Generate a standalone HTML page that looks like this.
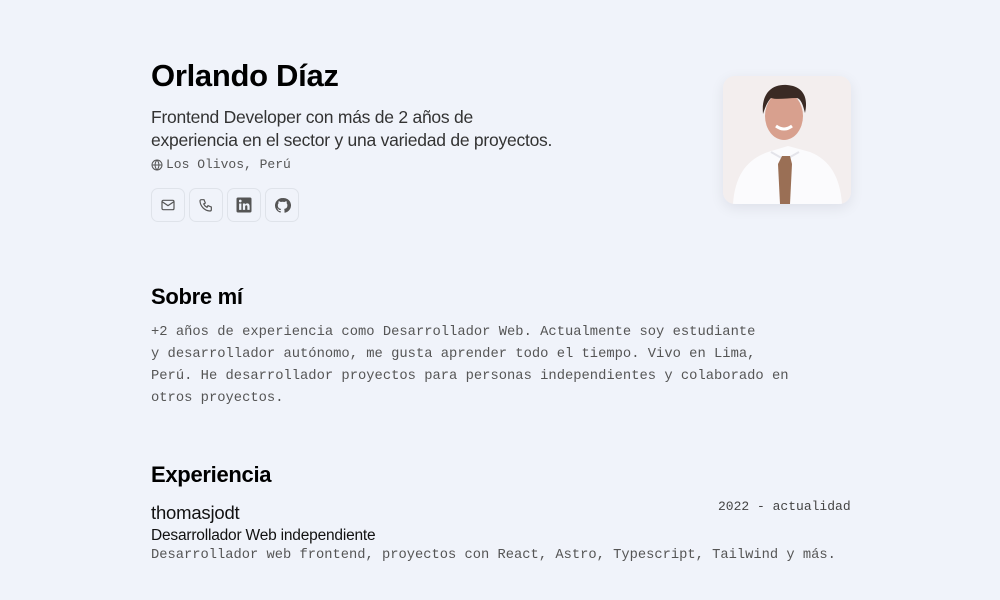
<!DOCTYPE html>
<html><head><meta charset="utf-8"><style>
*{margin:0;padding:0;box-sizing:border-box}
body{width:1000px;height:600px;background:#f0f3fa;font-family:"Liberation Sans",sans-serif;color:#000;position:relative;overflow:hidden}
.a{position:absolute;white-space:nowrap}
.mono{font-family:"Liberation Mono",monospace;color:#555}
.ic{position:absolute;top:188px;width:34px;height:34px;border:1px solid #dfe3ea;border-radius:7px;display:flex;align-items:center;justify-content:center}
</style></head><body>
<div class="a" style="left:151px;top:58px;font-size:31px;font-weight:bold;letter-spacing:-0.3px">Orlando Díaz</div>
<div class="a" style="left:151px;top:106px;font-size:17.5px;line-height:23px;color:#333;letter-spacing:-0.25px">Frontend Developer con más de 2 años de<br>experiencia en el sector y una variedad de proyectos.</div>
<div class="a mono" style="left:151px;top:157px;font-size:13px;display:flex;align-items:center"><svg width="12" height="12" viewBox="0 0 24 24" fill="none" stroke="#555" stroke-width="2" style="margin-right:3px"><circle cx="12" cy="12" r="10"/><path d="M2 12h20M12 2a15 15 0 0 1 0 20M12 2a15 15 0 0 0 0 20"/></svg>Los Olivos, Perú</div>
<div class="ic" style="left:151px"><svg width="16" height="16" viewBox="0 0 24 24" fill="none" stroke="#555" stroke-width="1.8"><rect x="3" y="5" width="18" height="14" rx="2"/><path d="M3 7l9 6 9-6"/></svg></div>
<div class="ic" style="left:189px"><svg width="16" height="16" viewBox="0 0 24 24" fill="none" stroke="#555" stroke-width="1.8"><path d="M5 4h4l2 5-2.5 1.5a11 11 0 0 0 5 5L15 13l5 2v4a2 2 0 0 1-2 2A16 16 0 0 1 3 6a2 2 0 0 1 2-2"/></svg></div>
<div class="ic" style="left:227px"><svg width="18" height="18" viewBox="0 0 24 24"><rect x="2" y="2" width="20" height="20" rx="2" fill="#555"/><rect x="5.5" y="10" width="3" height="8.5" fill="#f0f3fa"/><circle cx="7" cy="6.7" r="1.8" fill="#f0f3fa"/><path d="M10.5 10h2.8v1.3c.6-1 1.7-1.5 2.9-1.5 2.3 0 3.3 1.4 3.3 4v4.7h-3v-4.3c0-1.2-.4-1.9-1.4-1.9s-1.6.7-1.6 1.9v4.3h-3z" fill="#f0f3fa"/></svg></div>
<div class="ic" style="left:265px"><svg width="17" height="17" viewBox="0 0 24 24" fill="#555"><path d="M12 1.5a10.5 10.5 0 0 0-3.3 20.5c.5.1.7-.2.7-.5v-1.8c-2.9.6-3.5-1.4-3.5-1.4-.5-1.2-1.2-1.5-1.2-1.5-.9-.7.1-.6.1-.6 1 .1 1.6 1.1 1.6 1.1.9 1.6 2.5 1.1 3.1.9.1-.7.4-1.1.7-1.4-2.3-.3-4.8-1.2-4.8-5.2 0-1.1.4-2.1 1.1-2.8-.1-.3-.5-1.3.1-2.8 0 0 .9-.3 2.9 1.1a10 10 0 0 1 5.3 0c2-1.4 2.9-1.1 2.9-1.1.6 1.5.2 2.5.1 2.8.7.7 1.1 1.7 1.1 2.8 0 4-2.5 4.9-4.8 5.2.4.3.7 1 .7 2v2.9c0 .3.2.6.7.5A10.5 10.5 0 0 0 12 1.5"/></svg></div>
<div class="a" style="left:723px;top:76px;width:128px;height:128px;border-radius:12px;overflow:hidden;box-shadow:0 4px 14px rgba(0,0,40,.08)">
<svg width="128" height="128" viewBox="0 0 128 128"><rect width="128" height="128" fill="#f3eeee"/><path d="M10 128c2-30 15-45 35-52l20-6 22 6c20 8 30 25 32 52z" fill="#fbfbfd"/><path d="M48 76l14 8 14-8" fill="none" stroke="#e4e4ea" stroke-width="2"/><path d="M59 80h8l2 8-2 40h-10l-2-40z" fill="#9a6f55"/><ellipse cx="61" cy="40" rx="19" ry="24" fill="#d8a08e"/><path d="M40 38c-2-22 10-30 24-29s22 10 18 28c-2-8-4-14-8-15-10 0-20 2-26 0-4 4-6 10-8 16z" fill="#3a2a24"/><path d="M53 50q8 6 16 0" stroke="#fff" stroke-width="3" fill="none"/></svg></div>
<div class="a" style="left:151px;top:284px;font-size:22px;font-weight:bold;letter-spacing:-0.3px">Sobre mí</div>
<div class="a mono" style="left:151px;top:322px;font-size:13.8px;line-height:22px">+2 años de experiencia como Desarrollador Web. Actualmente soy estudiante<br>y desarrollador autónomo, me gusta aprender todo el tiempo. Vivo en Lima,<br>Perú. He desarrollador proyectos para personas independientes y colaborado en<br>otros proyectos.</div>
<div class="a" style="left:151px;top:462px;font-size:22px;font-weight:bold;letter-spacing:-0.3px">Experiencia</div>
<div class="a" style="left:151px;top:502px;font-size:18.5px;letter-spacing:-0.2px;color:#111">thomasjodt</div>
<div class="a mono" style="left:718px;top:499px;font-size:13px;color:#444">2022 - actualidad</div>
<div class="a" style="left:151px;top:527px;font-size:15.5px;letter-spacing:-0.2px;color:#111">Desarrollador Web independiente</div>
<div class="a mono" style="left:151px;top:548px;font-size:13.75px">Desarrollador web frontend, proyectos con React, Astro, Typescript, Tailwind y más.</div>
</body></html>
